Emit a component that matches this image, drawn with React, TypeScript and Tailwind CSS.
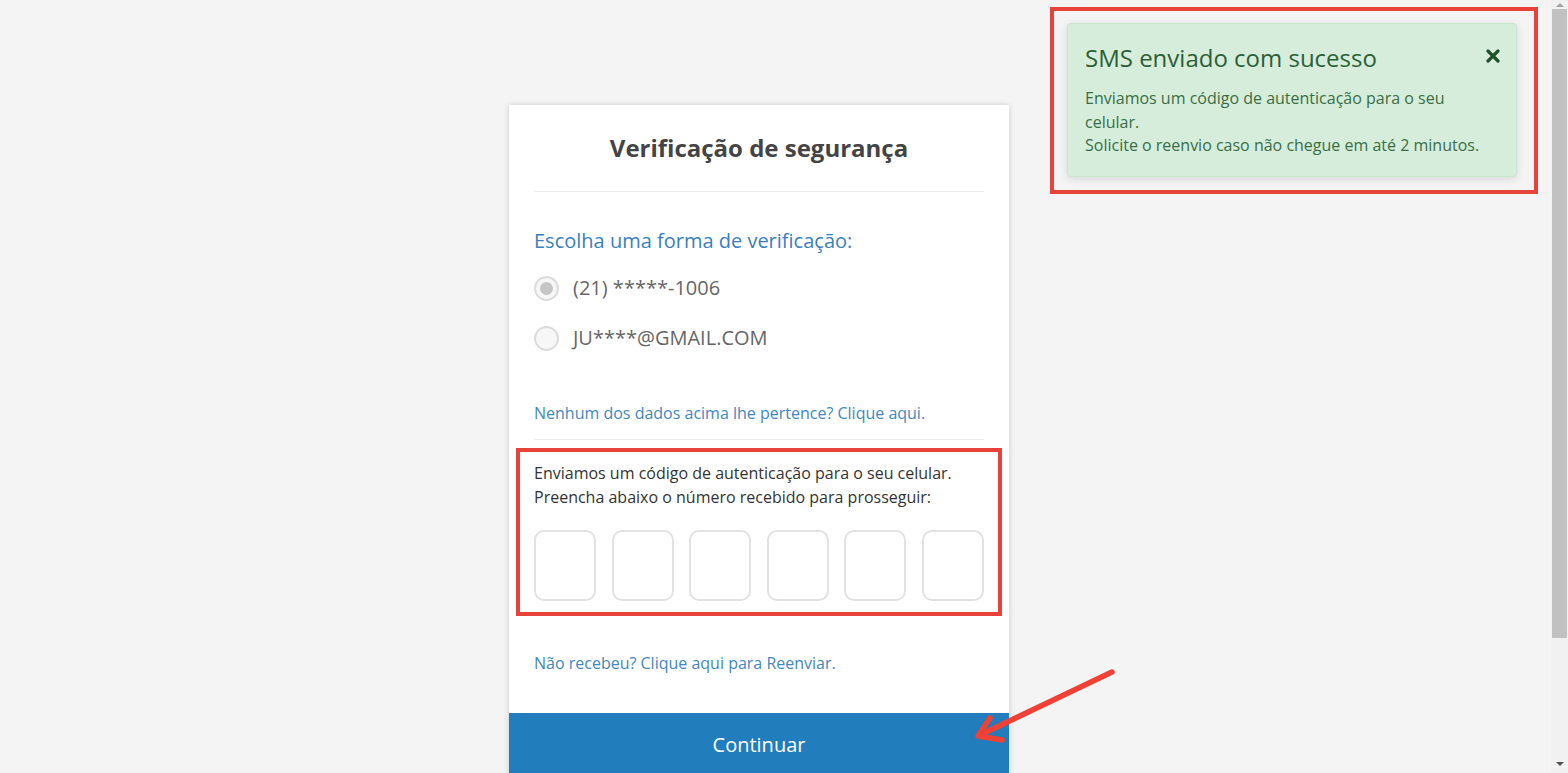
import React from 'react';

// caixas do código de verificação
const codeSlots = [0, 1, 2, 3, 4, 5];

function Radio({ checked, label }: { checked?: boolean; label: string }) {
  return (
    <label className="flex h-[50px] items-center gap-[14px]">
      <span className="flex h-[25px] w-[25px] items-center justify-center rounded-full border-2 border-[#dcdcdc] bg-[#f7f7f7]">
        {checked && <span className="h-[13px] w-[13px] rounded-full bg-[#c6c6c6]" />}
      </span>
      <span className="text-[20px] text-[#666]">{label}</span>
    </label>
  );
}

function Toast() {
  return (
    <div className="absolute left-[1050px] top-[7px] h-[187px] w-[488px] border-4 border-[#e8433a] pl-[13px] pt-[12px]">
      <div className="w-[450px] rounded-[4px] border border-[#c9e6cf] bg-[#d5edda] px-[17px] pb-[18px] pt-[18px] shadow-[0_2px_8px_rgba(0,0,0,0.12)]">
        <div className="flex items-center justify-between">
          <h3 className="text-[24px] leading-[32px] text-[#2c5f38]">SMS enviado com sucesso</h3>
          <svg width="14" height="14" viewBox="0 0 14 14" className="mr-[-1px] mt-[-5px]">
            <path d="M2 2 L12 12 M12 2 L2 12" stroke="#1f5229" strokeWidth="3.2" strokeLinecap="round" />
          </svg>
        </div>
        <p className="mt-[13px] max-w-[400px] text-[16px] leading-[23.5px] text-[#3b6d46]">
          Enviamos um código de autenticação para o seu celular.
          <br />
          Solicite o reenvio caso não chegue em até 2 minutos.
        </p>
      </div>
    </div>
  );
}

function Scrollbar() {
  return (
    <div className="flex w-[17px] flex-col items-center bg-[#f1f1f1]">
      <div className="flex h-[9px] items-center justify-center">
        <span className="h-0 w-0 border-x-[4px] border-b-[4px] border-x-transparent border-b-[#a3a3a3]" />
      </div>
      <div className="h-[629px] w-[15px] bg-[#c1c1c1]" />
      <div className="flex-1" />
      <div className="flex h-[18px] items-center justify-center">
        <span className="h-0 w-0 border-x-[4px] border-t-[4px] border-x-transparent border-t-[#505050]" />
      </div>
    </div>
  );
}

export default function App() {
  return (
    <div className="flex h-[773px] w-[1568px] overflow-hidden bg-[#f4f4f4] font-['Open_Sans',sans-serif]">
      <main className="relative flex-1 pl-[509px] pt-[105px]">
        {/* cartão */}
        <section className="w-[500px] bg-white shadow-[0_0_6px_rgba(0,0,0,0.16)]">
          <div className="px-[25px]">
            <h1 className="pt-[25px] text-center text-[24px] font-bold leading-[36px] text-[#444]">
              Verificação de segurança
            </h1>
            <hr className="mt-[25px] border-[#eeeeee]" />

            <p className="mt-[34px] text-[20px] leading-[30px] text-[#3a80bd]">Escolha uma forma de verificação:</p>
            <div className="mt-[7px]">
              <Radio checked label="(21) *****-1006" />
              <Radio label="JU****@GMAIL.COM" />
            </div>

            <a className="mt-[38px] block text-[16px] leading-[24px] text-[#4287c2]">
              Nenhum dos dados acima lhe pertence? Clique aqui.
            </a>
            <hr className="mt-[14px] border-[#eeeeee]" />

            {/* destaque vermelho */}
            <div className="-mx-[18px] mt-[8px] border-4 border-[#e8433a] px-[14px] pb-[11px] pt-[9px]">
              <p className="text-[16px] leading-[24px] text-[#333]">
                Enviamos um código de autenticação para o seu celular.
                <br />
                Preencha abaixo o número recebido para prosseguir:
              </p>
              <div className="mt-[21px] flex justify-between">
                {codeSlots.map((i) => (
                  <div key={i} className="h-[71px] w-[62px] rounded-[10px] border-2 border-[#e2e2e2] bg-white" />
                ))}
              </div>
            </div>

            <a className="mt-[35px] block text-[16px] leading-[24px] text-[#4287c2]">
              Não recebeu? Clique aqui para Reenviar.
            </a>
          </div>

          <button className="mt-[38px] flex h-[64px] w-full items-center justify-center bg-[#217dbb] text-[20px] text-white">
            Continuar
          </button>
        </section>

        <Toast />

        {/* seta */}
        <svg className="absolute left-[960px] top-[650px]" width="170" height="100" viewBox="0 0 170 100">
          <path
            d="M152 22 L18 86 M30 68 L18 86 L42 90"
            fill="none"
            stroke="#ef4136"
            strokeWidth="5.5"
            strokeLinecap="round"
            strokeLinejoin="round"
          />
        </svg>
      </main>
      <Scrollbar />
    </div>
  );
}
